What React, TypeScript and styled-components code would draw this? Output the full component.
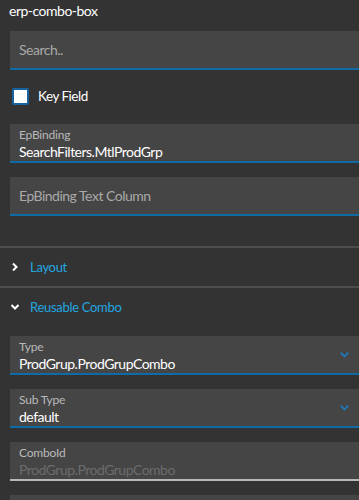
import styled, { createGlobalStyle } from "styled-components";

const GlobalStyle = createGlobalStyle`
  html, body {
    margin: 0;
    padding: 0;
    background: #333333;
  }
  body {
    font-family: "Lato", "Noto Sans", sans-serif;
    color: #ffffff;
  }
`;

const Panel = styled.div`
  width: 359px;
  height: 500px;
  overflow: hidden;
  background: #333333;
  display: flex;
  flex-direction: column;

  & > * {
    flex-shrink: 0;
  }
`;

const Title = styled.div`
  padding: 2px 0 0 9px;
  height: 29px;
  font-size: 14px;
  letter-spacing: -0.5px;
  line-height: 17px;
  color: #ffffff;
`;

const Field = styled.div<{ $muted?: boolean }>`
  margin-left: 10px;
  height: 37px;
  background: #454545;
  border-bottom: 2px solid ${(p) => (p.$muted ? "#b8b8b8" : "#0f6aa6")};
  padding: 0 9px;
  display: flex;
  align-items: center;
  position: relative;
`;

const Stack = styled.div`
  display: flex;
  flex-direction: column;
  align-self: flex-start;
  padding-top: 4px;
`;

const Label = styled.div`
  font-size: 12px;
  letter-spacing: -0.2px;
  line-height: 14px;
  color: #b9b9b9;
`;

const Value = styled.div<{ $dim?: boolean }>`
  margin-top: 1px;
  font-size: 14px;
  letter-spacing: -0.5px;
  line-height: 17px;
  color: ${(p) => (p.$dim ? "#6c6c6c" : "#ffffff")};
`;

const Placeholder = styled.div`
  font-size: 14px;
  letter-spacing: -0.5px;
  color: #a9a9a9;
`;

const Gap = styled.div<{ $h: number }>`
  height: ${(p) => p.$h}px;
`;

const CheckRow = styled.label`
  display: flex;
  align-items: center;
  gap: 9px;
  padding-left: 12px;
  height: 24px;
  font-size: 13.5px;
  letter-spacing: -0.5px;
`;

const Box = styled.span`
  width: 13px;
  height: 13px;
  border: 2px solid #1763a0;
  border-radius: 2px;
  background: #ffffff;
`;

const Divider = styled.div`
  height: 2px;
  background: #4d4d4d;
`;

const Section = styled.div`
  display: flex;
  align-items: center;
  gap: 11px;
  height: 38px;
  padding-left: 11px;
  font-size: 13px;
  letter-spacing: -0.3px;
  color: #23a6e0;
`;

const Chevron = styled.svg`
  width: 8px;
  height: 8px;
  flex-shrink: 0;
`;

const DropArrow = styled.svg`
  position: absolute;
  right: 10px;
  top: 16px;
  width: 9px;
  height: 6px;
`;

const ChevronRight = () => (
  <Chevron viewBox="0 0 8 8">
    <path d="M2 0.5 L5.5 4 L2 7.5" stroke="#ffffff" strokeWidth="2" fill="none" />
  </Chevron>
);

const ChevronDown = () => (
  <Chevron viewBox="0 0 8 8">
    <path d="M0.5 2 L4 5.5 L7.5 2" stroke="#ffffff" strokeWidth="2" fill="none" />
  </Chevron>
);

const Arrow = () => (
  <DropArrow viewBox="0 0 9 6">
    <path d="M0.7 0.7 L4.5 4.5 L8.3 0.7" stroke="#1f78b8" strokeWidth="1.8" fill="none" />
  </DropArrow>
);

export default function App() {
  return (
    <>
      <GlobalStyle />
      <Panel>
        <Title>erp-combo-box</Title>
        <Field>
          <Placeholder>Search..</Placeholder>
        </Field>
        <Gap $h={14} />
        <CheckRow>
          <Box />
          Key Field
        </CheckRow>
        <Gap $h={16} />
        <Field>
          <Stack>
            <Label>EpBinding</Label>
            <Value>SearchFilters.MtlProdGrp</Value>
          </Stack>
        </Field>
        <Gap $h={14} />
        <Field>
          <Placeholder>EpBinding Text Column</Placeholder>
        </Field>
        <Gap $h={30} />
        <Divider />
        <Section>
          <ChevronRight />
          Layout
        </Section>
        <Divider />
        <Section>
          <ChevronDown />
          Reusable Combo
        </Section>
        <Gap $h={10} />
        <Field>
          <Stack>
            <Label>Type</Label>
            <Value>ProdGrup.ProdGrupCombo</Value>
          </Stack>
          <Arrow />
        </Field>
        <Gap $h={14} />
        <Field>
          <Stack>
            <Label>Sub Type</Label>
            <Value>default</Value>
          </Stack>
          <Arrow />
        </Field>
        <Gap $h={14} />
        <Field $muted>
          <Stack>
            <Label>ComboId</Label>
            <Value $dim>ProdGrup.ProdGrupCombo</Value>
          </Stack>
        </Field>
        <Gap $h={14} />
        <Field />
      </Panel>
    </>
  );
}
